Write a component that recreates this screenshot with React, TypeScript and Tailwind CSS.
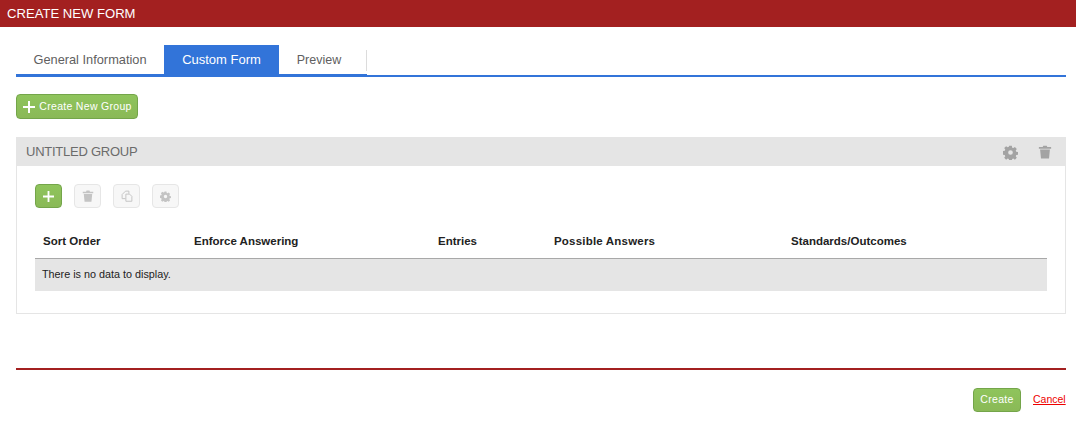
import React from "react";

const Gear = ({ size, color }: { size: number; color: string }) => (
  <svg width={size} height={size} viewBox="0 0 16 16" fill={color}>
    <path fillRule="evenodd" d="M6.600 0.800h2.800l.4 2 1.200.5 1.700-1.100 2 2-1.100 1.700.5 1.200 2 .4v2.800l-2 .4-.5 1.200 1.100 1.700-2 2-1.700-1.100-1.200.5-.4 2H6.600l-.4-2-1.200-.5-1.700 1.100-2-2 1.100-1.700-.5-1.200-2-.4V6.500l2-.4.5-1.200-1.100-1.700 2-2 1.700 1.100 1.200-.5zM8 5.500a2.500 2.500 0 1 0 0 5 2.500 2.500 0 0 0 0-5z" />
  </svg>
);

const Trash = ({ size, color }: { size: number; color: string }) => (
  <svg width={size} height={size} viewBox="0 0 16 16" fill={color}>
    <path d="M6 0.800h4l.6 1.400H15v2H1v-2h4.400zM2.400 5.200h11.200L12.600 15.500H3.400z" />
  </svg>
);

const Copy = ({ size, color }: { size: number; color: string }) => (
  <svg width={size} height={size} viewBox="0 0 16 16" fill="none" stroke={color} strokeWidth="1.300">
    <path d="M6 11.500H1.500V6L6 1.500h4.500V5" />
    <path d="M6.500 5.500h5l3 3v6.500h-8z" />
  </svg>
);

const Plus = ({ size }: { size: number }) => (
  <svg width={size} height={size} viewBox="0 0 12 12" stroke="#fff" strokeWidth="2" fill="none">
    <path d="M6 0v12M0 6h12" />
  </svg>
);

const iconBtn =
  "w-[27px] h-[24px] rounded-[4px] border border-[#e6e6e6] bg-[#f7f7f7] flex items-center justify-center";
const greenBtn =
  "rounded-[4px] border border-[#74a54a] bg-gradient-to-b from-[#8fc45c] to-[#8ab957] flex items-center justify-center text-white";
const th = "text-[11.5px] font-bold text-[#222]";

export default function App() {
  return (
    <div className="w-[1076px] h-[421px] bg-white overflow-hidden font-['Liberation_Sans',sans-serif]">
      <div className="h-[27px] bg-[#a32020] text-white text-[13.100px] leading-[27px] pl-[7px]">
        CREATE NEW FORM
      </div>

      <div className="pl-[16px] pr-[10px]">
        {/* Tabs */}
        <div className="mt-[18px] h-[32px] border-b-2 border-[#3274d9] flex items-start">
          <div className="h-[32px] border-b-[3px] border-[#3274d9] flex shrink-0 w-[351px] text-[13px]">
            <div className="w-[148px] h-[29px] flex items-center justify-center text-[12.800px] text-[#5f5f5f] pt-[1px]">
              General Information
            </div>
            <div className="w-[115px] h-[29px] flex items-center justify-center bg-[#3274d9] text-white pt-[1px]">
              Custom Form
            </div>
            <div className="w-[88px] h-[29px] flex items-center justify-center text-[12.500px] text-[#5f5f5f] pt-[1px] pr-[8px] relative">
              Preview
              <span className="absolute right-0 top-[5px] h-[21px] w-px bg-[#dcdcdc]" />
            </div>
          </div>
        </div>

        {/* Create group button */}
        <button className={`${greenBtn} mt-[17px] w-[122px] h-[25px] gap-[4px] text-[10.500px] tracking-[0.3px] pl-[1px] pt-[1px]`}>
          <Plus size={12} />
          Create New Group
        </button>

        {/* Group */}
        <div className="mt-[18px] h-[177px] border border-[#e5e5e5] border-t-0">
          <div className="h-[29px] -ml-px -mr-px bg-[#e5e5e5] flex items-center pl-[10px] pt-[1px] text-[13px] text-[#6b6b6b] tracking-[-0.25px]">
            <span className="flex-1">UNTITLED GROUP</span>
            <span className="mr-[20px] flex"><Gear size={15} color="#a3a3a3" /></span>
            <span className="mr-[14px] flex"><Trash size={14} color="#a3a3a3" /></span>
          </div>

          <div className="pl-[18px] pr-[18px]">
            <div className="mt-[18px] flex gap-[12px]">
              <button className={`${greenBtn} w-[27px] h-[24px]`}>
                <Plus size={11} />
              </button>
              <div className={iconBtn}><Trash size={12} color="#c4c4c4" /></div>
              <div className={iconBtn}><Copy size={12} color="#c4c4c4" /></div>
              <div className={iconBtn}><Gear size={11} color="#c4c4c4" /></div>
            </div>

            <div className="mt-[18px] h-[33px] border-b border-[#a8a8a8] flex items-center pb-[1px]">
              <span className={`${th} w-[159px] pl-[8px]`}>Sort Order</span>
              <span className={`${th} w-[244px]`}>Enforce Answering</span>
              <span className={`${th} w-[116px]`}>Entries</span>
              <span className={`${th} w-[237px] tracking-[0.2px]`}>Possible Answers</span>
              <span className={th}>Standards/Outcomes</span>
            </div>
            <div className="h-[32px] bg-[#e5e5e5] flex items-center pl-[7px] text-[10.800px] text-[#222] pb-[1px]">
              There is no data to display.
            </div>
          </div>
        </div>

        <div className="mt-[54px] h-[2px] bg-[#a32020]" />

        <div className="mt-[18px] flex items-center justify-end gap-[12px]">
          <button className={`${greenBtn} w-[48px] h-[24px] text-[10.500px] tracking-[0.3px]`}>
            Create
          </button>
          <a className="w-[33px] whitespace-nowrap text-[10.500px] text-[#ee0000] underline" href="#">
            Cancel
          </a>
        </div>
      </div>
    </div>
  );
}
